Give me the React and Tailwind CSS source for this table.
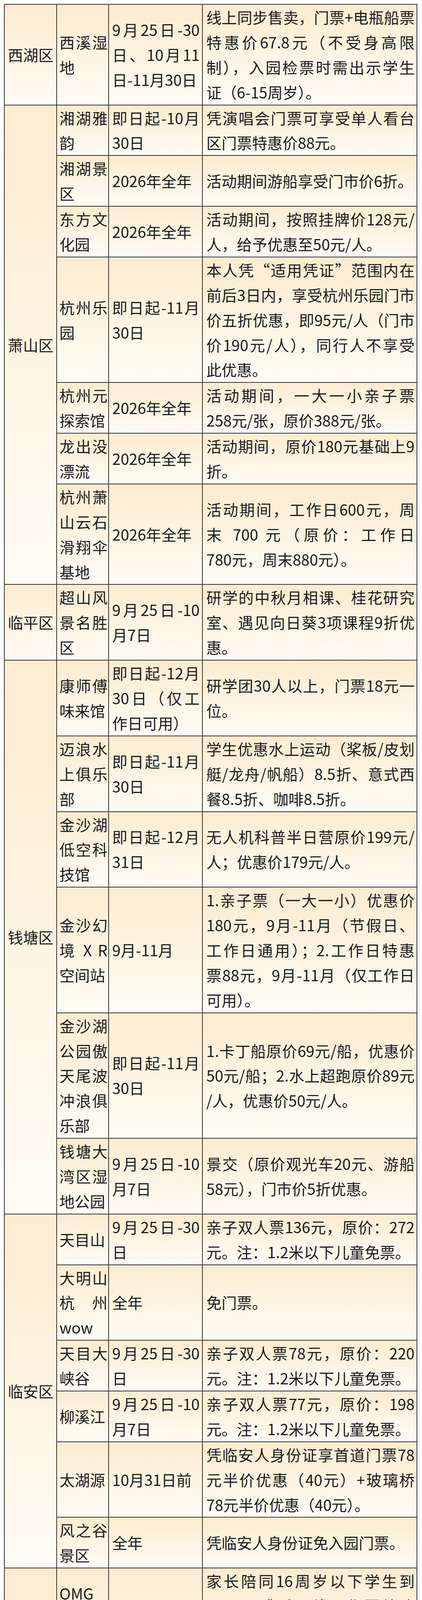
import React from 'react'

// 杭州各区县学生/亲子优惠景区一览（表格续页）
const groups = [
  {
    region: '西湖区',
    rows: [
      {
        name: ['西溪湿', '地'],
        date: ['9月25日-30', '日、10月11', '日-11月30日'],
        desc: ['线上同步售卖，门票+电瓶船票', '特惠价67.8元（不受身高限', '制），入园检票时需出示学生', '证（6-15周岁）。'],
      },
    ],
  },
  {
    region: '萧山区',
    rows: [
      { name: ['湘湖雅', '韵'], date: ['即日起-10月', '30日'], desc: ['凭演唱会门票可享受单人看台', '区门票特惠价88元。'] },
      { name: ['湘湖景', '区'], date: ['2026年全年'], desc: ['活动期间游船享受门市价6折。'] },
      { name: ['东方文', '化园'], date: ['2026年全年'], desc: ['活动期间，按照挂牌价128元/', '人，给予优惠至50元/人。'] },
      {
        name: ['杭州乐', '园'],
        date: ['即日起-11月', '30日'],
        desc: ['本人凭“适用凭证”范围内在', '前后3日内，享受杭州乐园门市', '价五折优惠，即95元/人（门市', '价190元/人），同行人不享受', '此优惠。'],
      },
      { name: ['杭州元', '探索馆'], date: ['2026年全年'], desc: ['活动期间，一大一小亲子票', '258元/张，原价388元/张。'] },
      { name: ['龙出没', '漂流'], date: ['2026年全年'], desc: ['活动期间，原价180元基础上9', '折。'] },
      {
        name: ['杭州萧', '山云石', '滑翔伞', '基地'],
        date: ['2026年全年'],
        desc: ['活动期间，工作日600元，周', '末 700 元（原价：工作日', '780元，周末880元）。'],
      },
    ],
  },
  {
    region: '临平区',
    rows: [
      {
        name: ['超山风', '景名胜', '区'],
        date: ['9月25日-10', '月7日'],
        desc: ['研学的中秋月相课、桂花研究', '室、遇见向日葵3项课程9折优', '惠。'],
      },
    ],
  },
  {
    region: '钱塘区',
    rows: [
      { name: ['康师傅', '味来馆'], date: ['即日起-12月', '30日（仅工', '作日可用）'], desc: ['研学团30人以上，门票18元一', '位。'] },
      {
        name: ['迈浪水', '上俱乐', '部'],
        date: ['即日起-11月', '30日'],
        desc: ['学生优惠水上运动（桨板/皮划', '艇/龙舟/帆船）8.5折、意式西', '餐8.5折、咖啡8.5折。'],
      },
      { name: ['金沙湖', '低空科', '技馆'], date: ['即日起-12月', '31日'], desc: ['无人机科普半日营原价199元/', '人；优惠价179元/人。'] },
      {
        name: ['金沙幻', '境 X R', '空间站'],
        date: ['9月-11月'],
        desc: ['1.亲子票（一大一小）优惠价', '180元，9月-11月（节假日、', '工作日通用）；2.工作日特惠', '票88元，9月-11月（仅工作日', '可用）。'],
      },
      {
        name: ['金沙湖', '公园傲', '天尾波', '冲浪俱', '乐部'],
        date: ['即日起-11月', '30日'],
        desc: ['1.卡丁船原价69元/船，优惠价', '50元/船；2.水上超跑原价89元', '/人，优惠价50元/人。'],
      },
      { name: ['钱塘大', '湾区湿', '地公园'], date: ['9月25日-10', '月7日'], desc: ['景交（原价观光车20元、游船', '58元），门市价5折优惠。'] },
    ],
  },
  {
    region: '临安区',
    rows: [
      { name: ['天目山'], date: ['9月25日-30', '日'], desc: ['亲子双人票136元，原价：272', '元。注：1.2米以下儿童免票。'] },
      { name: ['大明山', '杭州', 'wow'], date: ['全年'], desc: ['免门票。'] },
      { name: ['天目大', '峡谷'], date: ['9月25日-30', '日'], desc: ['亲子双人票78元，原价：220', '元。注：1.2米以下儿童免票。'] },
      { name: ['柳溪江'], date: ['9月25日-10', '月7日'], desc: ['亲子双人票77元，原价：198', '元。注：1.2米以下儿童免票。'] },
      { name: ['太湖源'], date: ['10月31日前'], desc: ['凭临安人身份证享首道门票78', '元半价优惠（40元）+玻璃桥', '78元半价优惠（40元）。'] },
      { name: ['风之谷', '景区'], date: ['全年'], desc: ['凭临安人身份证免入园门票。'] },
    ],
  },
  {
    region: '桐庐县',
    rows: [
      {
        name: ['OMG', '心跳乐', '园'],
        date: ['11月10日-', '30日'],
        desc: ['家长陪同16周岁以下学生到', 'OMG心跳乐园线下售票处购', '票，享受3人同行，学生免票的', '优惠（法定节假日除外）。'],
      },
      {
        name: ['天子地', '山野乐', '园'],
        date: ['9月28日-11', '月30日（秋', '假期间，以', '当地教育部', '门公布的秋', '假为准）'],
        desc: ['家长陪同16周岁以下学生到天', '子地山野乐园“超级大套票”', '线下售票处购票，即可享受2人', '同行，学生免票的专属福利。'],
      },
      {
        name: ['生仙里', '竹溪乐', '园'],
        date: ['9月28日-11', '月30日（秋', '假期间，以', '当地教育部', '门公布的秋', '假为准）'],
        desc: ['游客至景区线下售票处购票，', '即享门票8折优惠。'],
      },
      { name: ['瑶琳仙', '境'], date: ['11月10日-', '30日'], desc: ['对16周岁以下学生免票。'] },
      { name: ['严子陵', '钓台'], date: ['11月10日-', '30日'], desc: ['对16周岁以下学生免票。'] },
    ],
  },
  {
    region: '淳安县',
    rows: [
      {
        name: ['千岛湖', '景区'],
        nameSpan: 2,
        date: ['即日起-10月', '31日'],
        desc: ['联合景区各经营主体，推出基', '础票和畅游票：¶', '基础票含门票和景区交通；¶', '畅游票含门票、景区交通及岛', '屿二消项目，畅游票实行9折优', '惠。'],
      },
      {
        name: null,
        date: ['即日起（法', '定节假日除', '外）'],
        desc: ['基础票：门票全免，游船票', '7折；畅游票：门票全免，其余', '全部7折。¶', ''],
      },
      { name: ['文渊狮', '城景区'], date: ['即日起-12月', '31日'], desc: ['景区门票门市价5折。'] },
      { name: ['璞仕酒', '店'], date: ['即日起-12月', '31日'], desc: ['千岛湖文渊狮城璞仕酒店：携', '程价8.5折。'] },
      { name: ['千岛秘', '境'], date: ['即日起-12月', '31日'], desc: ['持浙江省学生证享受景区门票', '免费的优惠。'] },
      { name: ['白云溪', '漂流'], date: ['漂流开漂-漂', '流结束'], desc: ['持浙江省学生证享受景区优惠', '价：50元/人。'] },
      {
        name: ['千岛湖', '龙川湾'],
        date: ['即日起-12月', '31日'],
        desc: ['持浙江省学生证享受景区门票', '免费的优惠（原价80元）；另', '游船票40元、电瓶车票20元需', '自理。'],
      },
    ],
  },
  {
    region: '建德市',
    rows: [
      {
        name: ['大慈岩', '灵栖洞', '天¶', '新叶古', '村¶', '七里扬', '帆¶', '千岛湖', '好运岛'],
        date: ['9月25日-30', '日、11月1日', '-30日'],
        desc: ['中小学在校学生凭本人有效证', '件（学生证、身份证或户口', '簿）享建德5大景区首道门票免', '费。'],
      },
    ],
  },
]

// 每行文字单独成块、固定行高：自然折行的行两端对齐，段落末行左对齐（¶ 表示段落结束）
const Lines = ({ lines }) => (
  <>
    {lines.map((line, i) => {
      const hard = line.endsWith('¶')
      const text = hard ? line.slice(0, -1) : line
      const last = i === lines.length - 1
      return (
        <div
          key={i}
          className={
            last || hard
              ? 'h-[63.9px] overflow-visible whitespace-nowrap'
              : 'h-[63.9px] overflow-visible text-justify [text-align-last:justify]'
          }
        >
          {text || '\u00a0'}
        </div>
      )
    })}
  </>
)

const cell = 'border-2 border-[#363636] align-middle py-0 bg-linear-to-b from-[#fcecd0] to-[#fffcf5]'

const App = () => {
  return (
    <div className="bg-white pt-[10px] pl-[10px] pb-[10px] font-['Noto_Sans_CJK_SC',sans-serif] text-[39px] leading-[63.9px] text-[#1c1c1c]">
      <table className="w-[1058px] table-fixed border-collapse">
        <colgroup>
          <col className="w-[134px]" />
          <col className="w-[133px]" />
          <col className="w-[240px]" />
          <col />
        </colgroup>
        <tbody>
          {groups.map((g) =>
            g.rows.map((r, i) => (
              <tr key={g.region + i}>
                {i === 0 && (
                  <td rowSpan={g.rows.length} className={`${cell} pl-[8px] pr-[2px]`}>
                    <Lines lines={[g.region]} />
                  </td>
                )}
                {r.name && (
                  <td rowSpan={r.nameSpan || 1} className={`${cell} pl-[6px] pr-[2px]`}>
                    <Lines lines={r.name} />
                  </td>
                )}
                <td className={`${cell} pl-[8px] pr-[6px]`}>
                  <Lines lines={r.date} />
                </td>
                <td className={`${cell} pl-[9px] pr-[5px]`}>
                  <Lines lines={r.desc} />
                </td>
              </tr>
            ))
          )}
        </tbody>
      </table>
    </div>
  )
}

export default App
